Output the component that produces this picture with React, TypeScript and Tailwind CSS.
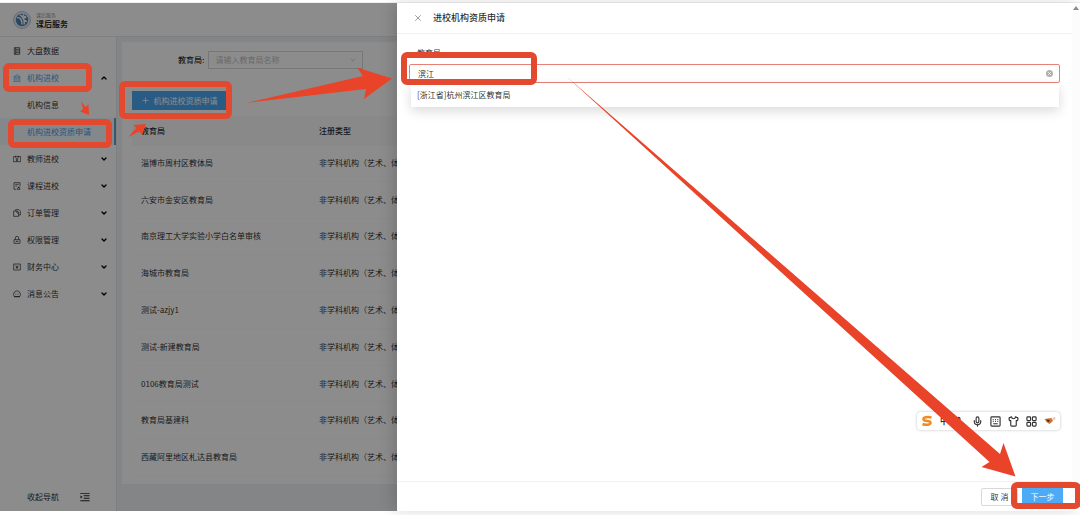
import React, { useState } from 'react';
import { AiOutlineMenuUnfold } from 'react-icons/ai';
import { ChevronDown, ChevronUp, Mic, Plus, Shirt, X } from 'lucide-react';

interface NavItem {
    label: string;
    icon: React.ReactNode;
    open?: boolean;
    leaf?: boolean;
    children?: { label: string; active?: boolean }[];
}

const NAV: NavItem[] = [
    {
        label: '大盘数据',
        leaf: true,
        icon: <path d="M4 2h16v20H4zM8 7h12M8 12h12M8 17h12M8 2v20" />,
    },
    {
        label: '机构进校',
        open: true,
        icon: <path d="M2 9l10-7 10 7zM4 10v10M9 10v10M15 10v10M20 10v10M1 22h22" />,
        children: [{ label: '机构信息' }, { label: '机构进校资质申请', active: true }],
    },
    {
        label: '教师进校',
        icon: <path d="M1 5h22v15H1zM8 2v6M16 2v6M8 12h8M12 9v8M9 17h6" />,
    },
    {
        label: '课程进校',
        icon: <path d="M10 22H3V2h18v11M7 7h10M7 12h5M13 22l2-6h4l2 6zM17 14v3" />,
    },
    {
        label: '订单管理',
        icon: <path d="M8 6V2h10l4 4v12h-5M2 6h11l4 5v11H2zM12 6v6h5" />,
    },
    {
        label: '权限管理',
        icon: <path d="M7 11V6a5 5 0 0 1 10 0v5M3 11h18v11H3zM9 18v-2M15 18v-2M9 16h6" />,
    },
    {
        label: '财务中心',
        icon: <path d="M2 3h20v18H2zM8 7l4 5 4-5M12 12v6M8 13h8" />,
    },
    {
        label: '消息公告',
        icon: <path d="M4 20a10.500 10.500 0 1 1 16 0H4zM7 12h2M11 12h2M15 12h2M3 20h18" />,
    },
];

const ROWS = [
    '淄博市周村区教体局',
    '六安市金安区教育局',
    '南京理工大学实验小学白名单审核',
    '海城市教育局',
    '测试-azjy1',
    '测试-新建教育局',
    '0106教育局测试',
    '教育局基建科',
    '西藏阿里地区札达县教育局',
];

function Logo() {
    return (
        <svg viewBox="0 0 32 32" className="size-[18px]" fill="none">
            <circle cx="16" cy="16" r="15" fill="#e4ecf4" stroke="#a9bccd" strokeWidth="1.500" />
            <circle cx="16" cy="16" r="11" fill="#4f82ae" />
            <path d="M7 12c6-1 9 3 9 12M12 7c6 3 9 8 8 17M19 6c-3 5-2 10 6 13" stroke="#fff" strokeWidth="2.500" />
            <circle cx="21" cy="11" r="2.500" fill="#fff" />
        </svg>
    );
}

function Sidebar() {
    return (
        <aside className="w-[117px] shrink-0 flex flex-col bg-white border-r border-gray-200">
            <nav>
                {NAV.map((item) => (
                    <div key={item.label}>
                        <button
                            className={`h-[27px] w-full flex items-center pl-[13px] pr-2 ${item.open ? 'text-[#4a9ee8]' : 'text-black/85'}`}
                        >
                            <svg viewBox="0 0 24 24" className="size-2 mr-1.5 shrink-0" fill="none" stroke="currentColor" strokeWidth="2">
                                {item.icon}
                            </svg>
                            <span>{item.label}</span>
                            {!item.leaf && (
                                <span className="ml-auto text-black">
                                    {item.open ? <ChevronUp size={8} strokeWidth={4} /> : <ChevronDown size={8} strokeWidth={4} />}
                                </span>
                            )}
                        </button>
                        {item.children?.map((child) => (
                            <a
                                key={child.label}
                                href="#"
                                className={
                                    child.active
                                        ? 'h-[27px] flex items-center pl-[27px] bg-[#f0f8fd] text-[#4a9ee8] border-r-2 border-[#6a9cc8]'
                                        : 'h-[27px] flex items-center pl-[27px] text-black/85'
                                }
                            >
                                {child.label}
                            </a>
                        ))}
                    </div>
                ))}
            </nav>
            <button className="mt-auto h-7 flex items-center gap-5 pl-[27px] text-black/85">
                <span>收起导航</span>
                <AiOutlineMenuUnfold size={12} />
            </button>
        </aside>
    );
}

function InstitutionList() {
    return (
        <main className="flex-1 min-w-0 bg-[#f0f2f5] pl-[5px] pt-[5px] pb-[27px]">
            <section className="bg-white pl-2.5">
                <div className="flex items-center pt-[9px] pl-[46px]">
                    <label htmlFor="bureau-filter" className="font-medium">教育局:</label>
                    <div className="relative ml-1">
                        <select
                            id="bureau-filter"
                            className="appearance-none w-[155px] h-[18px] border border-[#d9d9d9] bg-white pl-1.5 text-[#bfbfbf]"
                        >
                            <option>请输入教育局名称</option>
                        </select>
                        <ChevronDown size={8} className="absolute right-1.5 top-[5px] text-[#bfbfbf]" />
                    </div>
                </div>
                <button className="mt-[22px] h-[19px] w-[94px] flex items-center justify-center gap-1 bg-[#4ba8f2] text-white">
                    <Plus size={9} />
                    机构进校资质申请
                </button>
                <table className="mt-1.5 w-full h-[360px] table-fixed text-left">
                    <thead>
                        <tr className="h-[30px] bg-[#fafafa]">
                            <th className="w-[178px] pl-[9px] font-medium">教育局</th>
                            <th className="pl-[9px] font-medium">注册类型</th>
                        </tr>
                    </thead>
                    <tbody>
                        {ROWS.map((name) => (
                            <tr key={name} className="border-b border-[#fcfcfc]">
                                <td className="pl-[9px]">{name}</td>
                                <td className="pl-[9px] whitespace-nowrap">非学科机构（艺术、体</td>
                            </tr>
                        ))}
                    </tbody>
                </table>
                <div className="h-2" />
            </section>
        </main>
    );
}

function InputMethodBar() {
    return (
        <div className="mt-auto mb-[51px] mr-3 self-end h-[18px] w-[143px] flex items-center justify-between px-1 rounded bg-white text-[#333] shadow-[0_0_3px_rgba(0,0,0,0.25)]">
            <svg viewBox="0 0 24 24" className="size-3" fill="none" stroke="#f08a24" strokeWidth="5">
                <path d="M21 5C13 3 4 4 5 9s14 1 14 6-9 6-16 3" />
            </svg>
            <span className="font-bold">中</span>
            <svg viewBox="0 0 24 24" className="size-2.5" fill="none" stroke="currentColor" strokeWidth="3">
                <circle cx="8" cy="7" r="4" />
                <path d="M18 15v3l-3 4" />
            </svg>
            <Mic size={11} strokeWidth={2.5} />
            <svg viewBox="0 0 24 24" className="size-[11px]" fill="none" stroke="currentColor" strokeWidth="2.500">
                <rect x="2" y="2" width="20" height="20" rx="2" />
                <path d="M6 8h2M11 8h2M16 8h2M6 12h2M11 12h2M16 12h2M7 17h10" />
            </svg>
            <Shirt size={11} strokeWidth={2.5} />
            <svg viewBox="0 0 24 24" className="size-[11px]" fill="none" stroke="currentColor" strokeWidth="2.500">
                <rect x="2" y="2" width="8" height="8" rx="2" />
                <rect x="14" y="2" width="8" height="8" rx="2" />
                <rect x="2" y="14" width="8" height="8" rx="2" />
                <rect x="14" y="14" width="8" height="8" rx="2" />
            </svg>
            <svg viewBox="0 0 24 24" className="size-3">
                <path d="M1 8l14-2 3 6-7 6-6-4z" fill="#c8743a" />
                <path d="M5 9l6 1-1 4-3-1z" fill="#3b2a20" />
                <circle cx="20" cy="7" r="3" fill="#f3c9a5" />
            </svg>
        </div>
    );
}

function ApplyDrawer() {
    const [keyword, setKeyword] = useState('滨江');

    return (
        <div role="dialog" aria-labelledby="drawer-title" className="relative z-20 flex-1 min-w-0 flex bg-white shadow-[-4px_0_14px_rgba(0,0,0,0.15)]">
            <div className="flex-1 min-w-0 flex flex-col">
                <header className="h-[31px] shrink-0 flex items-center gap-2.5 pl-4 border-b border-[#f0f0f0]">
                    <button aria-label="关闭" className="text-[#8c8c8c]">
                        <X size={10} />
                    </button>
                    <h2 id="drawer-title" className="text-[9px] font-medium">进校机构资质申请</h2>
                </header>

                <div className="flex-1 flex flex-col pt-3">
                    <label htmlFor="bureau" className="pl-5 h-[18px] leading-[14px]">教育局</label>
                    <div className="ml-3 mr-3 h-[19px] flex items-center border border-[#e88078] rounded-xs pr-1.5">
                        <input
                            id="bureau"
                            value={keyword}
                            onChange={(e) => setKeyword(e.target.value)}
                            className="flex-1 min-w-0 h-full pl-2 outline-none"
                        />
                        <button aria-label="清除" onClick={() => setKeyword('')} className="size-[7px] flex items-center justify-center rounded-full bg-[#b0b0b0] text-white">
                            <X size={5} strokeWidth={3} />
                        </button>
                    </div>
                    <ul className="ml-3.5 mr-[13px] bg-white py-0.5 shadow-[0_4px_12px_rgba(0,0,0,0.15)]">
                        <li className="h-5 flex items-center pl-1.5">[浙江省]杭州滨江区教育局</li>
                    </ul>
                    <InputMethodBar />
                </div>

                <footer className="h-[30px] shrink-0 flex items-center justify-end gap-1 pr-[9px] border-t border-[#f0f0f0]">
                    <button className="h-[18px] w-[37px] border border-[#d9d9d9] rounded-xs">取 消</button>
                    <button className="h-[18px] w-[41px] bg-[#4dabf5] text-white">下一步</button>
                </footer>
            </div>
            <div className="w-2 shrink-0 bg-[#fcfcfc] pt-0.5">
                <svg viewBox="0 0 8 6" className="w-2 h-1.5"><path d="M4 1l3 4H1z" fill="#8c8c8c" /></svg>
            </div>
        </div>
    );
}

// Red guide marks: one frame per step, arrows lead to the next one
function StepMarks() {
    return (
        <svg className="absolute left-0 top-0 z-30 pointer-events-none" width="1080" height="515" viewBox="0 0 1080 515">
            <g fill="none" stroke="#e2492f" strokeWidth="6">
                <rect x="6" y="66" width="83" height="23" rx="3" />
                <rect x="11" y="122" width="98" height="23" rx="3" />
                <rect x="122" y="84" width="107" height="32" rx="3" />
                <rect x="404" y="55" width="130" height="27" rx="3" />
                <rect x="1014" y="485" width="64" height="21" rx="3" />
            </g>
            <g fill="#e94429">
                <path d="M81 101L85.500 107L88.500 104.500L89 115L80 111.500L83 109Z" />
                <path d="M128.500 137L136 128L133.500 125L146 124L142.500 134.500L139 131.500Z" />
                <path d="M246 103L363 76L357 67.500L392 78.500L364 99L366 89Z" />
                <path d="M566 76L1000 454L1003.500 443L1015.500 476.500L981.500 467L989.500 462Z" />
            </g>
        </svg>
    );
}

export default function App() {
    return (
        <div className="relative min-h-screen flex flex-col overflow-hidden bg-white pt-[3px] pb-1 text-[8px] leading-3 text-black/85 font-['Noto_Sans_CJK_SC','Noto_Sans',sans-serif]">
            <div className="flex-1 flex border-t border-[#f0f0f0] -mt-px">
                <div className="relative w-[397px] shrink-0 flex flex-col overflow-hidden">
                    <header className="h-[34px] shrink-0 flex items-center gap-[5px] pl-[13px] bg-white border-b border-gray-200">
                        <Logo />
                        <div>
                            <p className="text-[5px] leading-[7px] text-black/50">课后服务</p>
                            <p className="leading-[11px] font-bold">课后服务</p>
                        </div>
                    </header>
                    <div className="flex-1 flex">
                        <Sidebar />
                        <InstitutionList />
                    </div>
                    <div className="absolute inset-0 z-10 bg-black/45" />
                </div>
                <ApplyDrawer />
            </div>
            <StepMarks />
        </div>
    );
}
